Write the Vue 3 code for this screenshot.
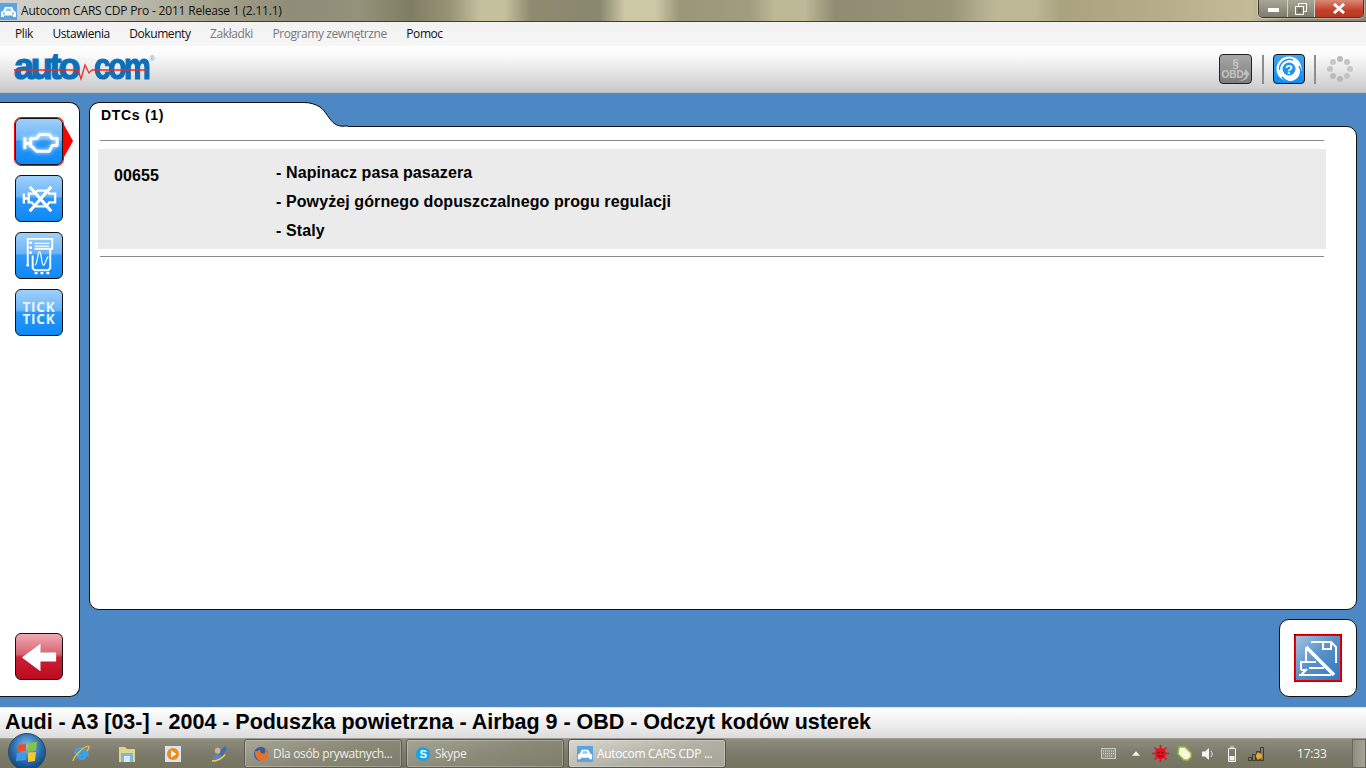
<script setup>
const menu = [
  { t: 'Plik' }, { t: 'Ustawienia' }, { t: 'Dokumenty' },
  { t: 'Zakładki', off: true }, { t: 'Programy zewnętrzne', off: true }, { t: 'Pomoc' }
]
const lines = ['- Napinacz pasa pasazera', '- Powyżej górnego dopuszczalnego progu regulacji', '- Staly']
const dots = [[14,4,'#bbb'],[21,7,'#c4c4c4'],[24,14,'#c8c8c8'],[21,21,'#c4c4c4'],[14,24,'#b8b8b8'],[7,21,'#bbb'],[4,14,'#c4c4c4'],[7,7,'#c8c8c8']]
</script>

<template>
  <div class="app">
    <header class="title">
      <svg class="caricon" width="17" height="17" viewBox="0 0 17 17"><rect width="17" height="17" fill="#5aa5e0"/><path d="M1 14V9l2-1 2-4h7l2 4 2 1v5h-3v-1.500H4V14z" fill="#fff"/><path d="M5.500 8l1-2.500h4l1 2.500z" fill="#8cc4ee"/><circle cx="4" cy="10.500" r="1" fill="#5aa5e0"/><circle cx="13" cy="10.500" r="1" fill="#5aa5e0"/></svg>
      <span class="titletext">Autocom CARS CDP Pro - 2011 Release 1 (2.11.1)</span>
      <div class="winbtns">
        <div class="wb wmin"><i></i></div>
        <div class="wb wres"><svg width="12" height="12" viewBox="0 0 12 12"><path d="M3.500.5h8v8h-8z" fill="none" stroke="#fff"/><path d="M.5 3.500h8v8h-8z" fill="#8a8775" stroke="#fff"/><path d="M2.500 5.500h4v4h-4z" fill="#6b6958"/></svg></div>
        <div class="wb wclose"><svg width="14" height="11" viewBox="0 0 14 11"><path d="M2 1l10 9M12 1L2 10" stroke="#fff" stroke-width="3"/></svg></div>
      </div>
    </header>

    <nav class="menu">
      <span v-for="m in menu" :key="m.t" :class="{ off: m.off }">{{ m.t }}</span>
    </nav>

    <div class="toolbar">
      <div class="logo">
        <span class="auto">auto</span><span class="com">com</span><sup>®</sup>
        <svg class="wave" width="136" height="22" viewBox="0 0 136 22"><path d="M0 11H64l3 9 4-14 4 8 3-3H134" fill="none" stroke="#ee2a24" stroke-width="1.300"/></svg>
      </div>
      <div class="tools">
        <div class="obd">
          <span class="par">§</span><span class="obdt">OBD</span>
          <svg class="obdarrow" width="12" height="13" viewBox="0 0 12 13"><path d="M0 12c4 1 7-1 8-5H5l3-6 4 6h-2c0 4-5 7-10 5z" fill="#bdbdbd"/></svg>
        </div>
        <i class="sep"></i>
        <div class="help">
          <svg width="28" height="28" viewBox="0 0 28 28"><circle cx="14" cy="14" r="12.500" fill="#fff"/><circle cx="14" cy="14" r="6.500" fill="#1f93ee"/><path d="M7 22A10 10 0 0 0 24 11" fill="none" stroke="#1f93ee" stroke-width="1.400"/><path d="M4.500 15A10 10 0 0 1 18 5" fill="none" stroke="#1f93ee" stroke-width="1.400"/><text x="14" y="18.500" text-anchor="middle" class="q">?</text></svg>
        </div>
        <i class="sep"></i>
        <svg class="spin" width="30" height="30" viewBox="0 0 30 30"><circle v-for="(d, i) in dots" :key="i" :cx="d[0] + 1" :cy="d[1] + 1" r="3" :fill="d[2]"/></svg>
      </div>
    </div>

    <main class="stage">
      <aside class="side">
        <div class="btn sel">
          <svg class="ic glow" width="45" height="45" viewBox="0 0 46 46"><path d="M8 19v12M8 25h6M14 20h6l3-4h10l3 4h5v7h-5l-3 6H20l-5-5h-1z" fill="none" stroke="#fff" stroke-width="3" stroke-linejoin="round"/></svg>
          <i class="pointer"></i>
        </div>
        <div class="btn">
          <svg class="ic" width="45" height="45" viewBox="0 0 46 46"><path d="M7 18v10M7 23h5M12 18h6l3-3h9l3 3h6v9h-6l-3 4H19l-4-4h-3z" fill="none" stroke="#fff" stroke-width="2.400"/><path d="M13 11l22 25M35 11L13 36" stroke="#fff" stroke-width="3.200"/></svg>
        </div>
        <div class="btn">
          <svg class="ic" width="45" height="45" viewBox="0 0 46 46"><path d="M11 33V6h25v10H18" fill="none" stroke="#fff" stroke-width="2"/><circle cx="14" cy="10" r="1.400" fill="#fff"/><circle cx="14" cy="15" r="1.400" fill="#fff"/><circle cx="14" cy="20" r="1.400" fill="#fff"/><circle cx="11" cy="33" r="1.500" fill="#fff"/><path d="M18 10.500h15M18 13.500h15" stroke="#fff" stroke-width="1.300"/><path d="M34 16v20l-2 2H18l-2-2V23" fill="none" stroke="#fff" stroke-width="2"/><path d="M18 33c3 0 3-14 5-14s2 14 4 14 2-6 5-9" fill="none" stroke="#fff" stroke-width="1.200"/><path d="M18 41h3M24 41h3M30 41h3" stroke="#fff" stroke-width="2.400"/></svg>
        </div>
        <div class="btn tick"><span>TICK<br>TICK</span></div>
        <div class="btn red">
          <svg class="ic" width="45" height="45" viewBox="0 0 46 46"><path d="M5 24L24 10v9h16v9H24v10z" fill="#fff"/></svg>
        </div>
      </aside>

      <div class="content">
        <section class="panel">
          <div class="tabrow">
            <div class="tab">DTCs (1)</div>
            <svg class="curve" width="44" height="25" viewBox="0 0 44 25"><path d="M0 .500C6 .500 11 2 16 5s10 14 15 17 7 2 13 2v1H0z" fill="#fff"/><path d="M0 .500C6 .500 11 2 16 5s10 14 15 17 7 2 13 2" fill="none" stroke="#000"/></svg>
            <div class="tabfill"></div>
          </div>
          <div class="pbody">
            <hr>
            <div class="row">
              <div class="code">00655</div>
              <div class="desc"><div v-for="l in lines" :key="l">{{ l }}</div></div>
            </div>
            <hr>
          </div>
        </section>
        <div class="foot">
          <div class="printbox">
            <div class="print">
              <svg width="44" height="44" viewBox="2 2 44 44"><path d="M17 8h20l5 5v16M29 8v7h8V8" fill="none" stroke="#fff" stroke-width="2"/><path d="M12 13l28 28" stroke="#fff" stroke-width="3.500"/><path d="M12 15v12M7 36v-8h15M7 36h6M5 41h32" fill="none" stroke="#fff" stroke-width="2"/><path d="M15 34h15M7 41l6-6" fill="none" stroke="#fff" stroke-width="2"/></svg>
            </div>
          </div>
        </div>
      </div>
    </main>

    <div class="status">Audi - A3 [03-] - 2004 - Poduszka powietrzna - Airbag 9 - OBD - Odczyt kodów usterek</div>

    <footer class="taskbar">
      <div class="orb">
        <svg width="38" height="38" viewBox="0 0 38 38"><defs><radialGradient id="o" cx=".5" cy=".35" r=".7"><stop offset="0" stop-color="#8cc2ec"/><stop offset=".55" stop-color="#2a6db0"/><stop offset="1" stop-color="#0f3a6e"/></radialGradient></defs><circle cx="19" cy="19" r="18.500" fill="url(#o)" stroke="#2b4a63"/><path d="M10 12l8-1.500v7.500l-9 .5z" fill="#e8522b"/><path d="M20 10.500l9-2-1 9-8 .5z" fill="#86c440"/><path d="M9 20l9-.5V27l-10 1z" fill="#3e9ae6"/><path d="M20 19.500l8-.5-1 9-7 1z" fill="#f3c82e"/></svg>
      </div>
      <div class="quick">
        <svg width="18" height="18" viewBox="0 0 18 18"><path d="M15.500 10.500H5.500C6 14 11 14.500 13.500 12.500M3 9c0-4 3-6 6.500-6s6 3 6 7H5.500c0-4 7-4 7.500-1.500" fill="none" stroke="#3fa2ec" stroke-width="2.400"/><path d="M1 16C2 11 11 2 16 1c2 0 1 3-1 5" fill="none" stroke="#f2c445" stroke-width="1.200"/></svg>
        <svg width="18" height="18" viewBox="0 0 18 18"><path d="M1 2h6l2 2h8v13H1z" fill="#e6d28a"/><path d="M3 8h12v9H3z" fill="#7cb8de"/><path d="M6 11h6v6H6z" fill="#dceaf5"/></svg>
        <svg width="16" height="16" viewBox="0 0 16 16"><rect width="16" height="16" fill="#d9e4ee"/><circle cx="8" cy="8" r="6" fill="#f08a1c"/><path d="M6 4.500L11.500 8 6 11.500z" fill="#fff"/></svg>
        <svg width="17" height="17" viewBox="0 0 18 18"><path d="M7 8l8-7 2 3-5 8z" fill="#3c6fb0"/><circle cx="7" cy="6" r="3" fill="#d8b48c"/><path d="M2 16c0-5 3-7 6-6s3 4 2 6z" fill="#5a86c2"/><path d="M1 17c5 0 10-2 14-7" fill="none" stroke="#f2d23c" stroke-width="1.500"/></svg>
      </div>
      <div class="tasks">
        <div class="task">
          <svg width="16" height="16" viewBox="0 0 17 17"><circle cx="8.500" cy="8.500" r="7.500" fill="#2c5f9e"/><path d="M2 5c0 8 4 11 8 11s6-3 6-7c0-3-2-6-4-7 2 3 1 6-1 6-3 0-4-2-3-4-3 0-3 3-6 1z" fill="#e8702a"/></svg>
          <span>Dla osób prywatnych...</span>
        </div>
        <div class="task">
          <svg width="16" height="16" viewBox="0 0 17 17"><circle cx="8.500" cy="8.500" r="7.500" fill="#12a5e8"/><text x="8.500" y="13" text-anchor="middle" class="sk">S</text></svg>
          <span>Skype</span>
        </div>
        <div class="task active">
          <svg width="16" height="16" viewBox="0 0 17 17"><rect width="17" height="17" fill="#5aa5e0"/><path d="M1 14V9l2-1 2-4h7l2 4 2 1v5h-3v-1.500H4V14z" fill="#fff"/><path d="M5.500 8l1-2.500h4l1 2.500z" fill="#8cc4ee"/></svg>
          <span>Autocom CARS CDP ...</span>
        </div>
      </div>
      <div class="tray">
        <svg width="15" height="11" viewBox="0 0 15 11"><rect x=".5" y=".5" width="14" height="10" fill="#8f8f82" stroke="#c8c8c0"/><path d="M2 3h11M2 5.500h11M4 8h7" stroke="#e2e2da" stroke-dasharray="1 1"/></svg>
        <svg width="8" height="6" viewBox="0 0 9 6"><path d="M4.500 0L9 5H0z" fill="#f2f2f0"/></svg>
        <svg width="17" height="17" viewBox="0 0 17 17"><circle cx="8.500" cy="8.500" r="5.500" fill="#e8101c"/><path d="M8.500 0v17M0 8.500h17M2.500 2.500l12 12M14.500 2.500l-12 12" stroke="#e8101c" stroke-width="1.600"/><circle cx="6.500" cy="7.500" r=".8" fill="#400"/><circle cx="10.500" cy="7.500" r=".8" fill="#400"/><path d="M6 10.500c1.500 1 3.500 1 5 0" fill="none" stroke="#400"/></svg>
        <svg width="15" height="15" viewBox="0 0 15 15"><path d="M2 1h6l6 6v4l-3 3H7L1 8z" fill="#f5f8dc" stroke="#8fbf3a" stroke-width="1.500"/></svg>
        <svg width="13" height="14" viewBox="0 0 13 14"><path d="M0 4.500h3L7 1v12L3 9.500H0z" fill="#f2f2f0"/><path d="M9 4c1.500 2 1.500 4 0 6" fill="none" stroke="#e8e8e4"/></svg>
        <svg width="10" height="16" viewBox="0 0 10 16"><path d="M3 1h4M1.500 2.500h7v13h-7z" fill="none" stroke="#f2f2f0"/><rect x="2.500" y="10" width="5" height="4.500" fill="#f2f2f0"/></svg>
        <svg width="16" height="14" viewBox="0 0 16 14"><path d="M.5 13.500v-3h3v3zM4.500 13.500v-6h3v6zM8.500 13.500v-9h3v9zM12.500 13.500V.5h3v13z" fill="none" stroke="#3c3c34"/><circle cx="11" cy="9" r="3" fill="#f5a71c"/></svg>
        <time>17:33</time>
        <div class="showdesk"></div>
      </div>
    </footer>
  </div>
</template>

<style scoped>
.app { width: 1366px; height: 768px; display: flex; flex-direction: column; overflow: hidden; position: relative; font-family: "Liberation Sans", Arial, sans-serif; background: #4d88c4; }
.title { height: 22px; flex: none; display: flex; align-items: center; box-sizing: border-box; padding-bottom: 1px; border-bottom: 1px solid #3f3d36; background: linear-gradient(90deg, #d2d2cc 0, #c5c4b8 100px, #a8a691 200px, #8f8c78 290px, #94927a 360px, #7f7d62 410px, #989478 450px, #c4bf9c 480px, #c4bf9c 505px, #8f8b70 530px, #8a8770 600px, #cdc8a6 625px, #cdc8a6 655px, #9a9679 680px, #a09c80 750px, #bdb896 775px, #bdb896 805px, #8f8c72 835px, #989578 950px, #bdb796 995px, #bdb796 1035px, #aaa380 1060px, #b5ab88 1150px, #c4bb98 1250px, #8e8a73 1290px, #8a8775 1366px); position: relative; }
.caricon { margin: 2px 4px 0 0; flex: none; }
.titletext { font: 12px "Open Sans", sans-serif; color: #111; letter-spacing: -.19px; margin-top: 1px; }
.winbtns { position: absolute; right: 2px; top: 0; height: 17px; display: flex; border: 1px solid #3a3a30; border-top: 0; border-radius: 0 0 5px 5px; overflow: hidden; box-shadow: 0 0 0 1px rgba(255,255,255,.35); }
.wb { display: flex; align-items: center; justify-content: center; background: linear-gradient(#a9a797, #7d7b69); }
.wmin { width: 28px; border-right: 1px solid #d0d0c8; }
.wmin i { width: 11px; height: 4px; background: #fff; margin-top: 3px; }
.wres { width: 26px; border-right: 1px solid #d0d0c8; }
.wclose { width: 48px; background: linear-gradient(#d98a74, #c2402a 60%, #b83a22); }

.menu { height: 24px; flex: none; box-sizing: border-box; padding: 0 0 2px 15px; display: flex; align-items: center; gap: 19.500px; background: linear-gradient(#f2f2f2, #f6f6f6); font: 12px "Open Sans", sans-serif; color: #111; letter-spacing: -.42px; }
.menu .off { color: #77787a; }

.toolbar { height: 47px; flex: none; box-sizing: border-box; display: flex; align-items: center; justify-content: space-between; background: linear-gradient(#fff, #fbfbfb 20%, #c9c9c9); border-bottom: 1px solid #bdbdbd; }
.logo { position: relative; margin-left: 14px; font: bold 36px/40px "Liberation Sans", sans-serif; color: #0d6fb8; -webkit-text-stroke: 1.200px #0d6fb8; display: flex; width: 140px; height: 40px; margin-top: -4px; }
.logo .auto { letter-spacing: -3.200px; }
.logo .com { margin-left: 17px; letter-spacing: -3.200px; display: inline-block; transform: scaleX(.84); transform-origin: left center; width: 52px; }
.logo sup { font-size: 8px; line-height: 8px; letter-spacing: 0; -webkit-text-stroke: 0; margin: 8px 0 0 3px; color: #6aa0cc; font-weight: 400; }
.wave { position: absolute; left: 0; top: 12px; }
.tools { display: flex; align-items: center; margin-right: 11px; gap: 9px; }
.obd { width: 31px; height: 28px; border: 1px solid #222; border-radius: 4px; margin-right: 1px; background: linear-gradient(#a8a8a8, #7c7c7c); position: relative; display: flex; flex-direction: column; align-items: center; color: #c4c4c4; overflow: hidden; }
.par { font: bold 12px/12px "Liberation Sans", sans-serif; margin-top: 3px; }
.obdt { font: bold 10px/10px "Liberation Sans", sans-serif; margin-left: -6px; }
.obdarrow { position: absolute; right: 1px; bottom: 2px; }
.sep { width: 2px; height: 29px; background: #8d8d8d; }
.help { width: 30px; height: 28px; border: 1px solid #111; border-radius: 4px; background: linear-gradient(#3aa4f5, #0f8df0); display: flex; align-items: center; justify-content: center; }
.q { font: bold 13px "Liberation Sans", sans-serif; fill: #fff; }

.stage { flex: 1; min-height: 0; display: flex; gap: 9px; padding: 9px 9px 10px 0; background: #4d88c4; }
.side { width: 80px; flex: none; box-sizing: border-box; background: #fff; border: 1px solid #111; border-left: 0; border-radius: 0 10px 10px 0; padding: 15px 0 16px 15px; display: flex; flex-direction: column; gap: 10px; }
.btn { width: 48px; height: 47px; box-sizing: border-box; border: 1px solid #111; border-radius: 6px; background: linear-gradient(#9fd0fb 0, #6ab4f8 45%, #2a97fa 50%, #0d89f5); display: flex; align-items: center; justify-content: center; position: relative; flex: none; }
.btn.sel { outline: 1px solid #f00; border-radius: 6px; }
.glow { filter: drop-shadow(0 0 2px rgba(255,255,255,.9)); }
.pointer { position: absolute; left: 47px; top: 4px; width: 0; height: 0; border-top: 18px solid transparent; border-bottom: 18px solid transparent; border-left: 10px solid #f00; }
.tick { font: bold 13.500px/12px "Open Sans", sans-serif; color: #e8f4ff; letter-spacing: .8px; text-align: center; }
.red { margin-top: auto; background: linear-gradient(#f0aab2 0, #d66473 45%, #c92033 52%, #bd0a1f); }

.content { flex: 1; min-width: 0; display: flex; flex-direction: column; gap: 9px; }
.panel { flex: 1; min-height: 0; display: flex; flex-direction: column; }
.tabrow { display: flex; height: 25px; flex: none; position: relative; z-index: 1; margin-bottom: -1px; }
.tab { width: 215px; box-sizing: border-box; background: #fff; border: 1px solid #111; border-right: 0; border-bottom: 0; border-radius: 10px 0 0 0; padding: 4px 0 0 11px; font: bold 14px/17px "Liberation Sans", sans-serif; letter-spacing: .7px; color: #000; }
.curve { flex: none; }
.tabfill { flex: 1; }
.pbody { flex: 1; min-height: 0; box-sizing: border-box; background: #fff; border: 1px solid #111; border-radius: 0 10px 10px 10px; padding: 13px 32px 0 10px; }
hr { height: 1px; border: 0; background: #8a8a8a; margin: 0; }
.row { margin: 8px -2px 7px -2px; height: 100px; background: #ebebeb; display: flex; padding: 0 0 0 16px; color: #000; font-weight: 700; }
.code { width: 162px; font-size: 16px; line-height: 20px; padding-top: 17px; letter-spacing: .1px; }
.desc { font-size: 16px; line-height: 29px; padding-top: 9px; letter-spacing: .1px; }
.foot { flex: none; display: flex; justify-content: flex-end; }
.printbox { width: 78px; height: 78px; box-sizing: border-box; background: #fff; border: 1px solid #111; border-radius: 10px; display: flex; align-items: center; justify-content: center; }
.print { width: 48px; height: 48px; box-sizing: border-box; border: 1px dotted #111; box-shadow: inset 0 0 0 1px #e8000a; background: linear-gradient(135deg, #a8c5e0, #5590ca 50%, #2e78bd) padding-box, #e8000a border-box; display: flex; align-items: center; justify-content: center; }

.status { height: 31px; flex: none; box-sizing: border-box; background: linear-gradient(#fff, #e8e8e8 70%, #dcdcdc); border-top: 1px solid #e4e4e4; padding: 0 0 0 5px; font: bold 21.500px/28px "Liberation Sans", sans-serif; letter-spacing: -.025px; color: #000; white-space: nowrap; }

.taskbar { height: 30px; flex: none; display: flex; align-items: center; position: relative; background: linear-gradient(#8e8d7e, #7c7b6b 50%, #75745f); border-top: 1px solid #9d9d92; box-sizing: border-box; }
.orb { position: absolute; left: 8px; top: -6px; width: 38px; height: 38px; }
.quick { display: grid; grid-template-columns: repeat(4, 46px); justify-items: center; align-items: center; margin-left: 58px; }
.tasks { display: flex; gap: 4px; margin-left: 2px; }
.task { width: 158px; height: 29px; box-sizing: border-box; border: 1px solid #5b5a4e; border-radius: 3px; box-shadow: inset 0 0 0 1px rgba(255,255,255,.25); background: linear-gradient(165deg, #a5a496, #8b8a79 50%, #7e7d6b); display: flex; align-items: center; gap: 4px; padding-left: 8px; font: 12px "Open Sans", sans-serif; color: #eeeee8; letter-spacing: -.33px; white-space: nowrap; overflow: hidden; }
.task.active { background: linear-gradient(165deg, #d9d9d2, #b2b1a5 55%, #a5a497); border-color: #55544a; color: #fff; }
.tray { position: absolute; right: 0; top: 0; height: 29px; display: flex; align-items: center; }
.tray > svg:nth-child(1) { margin-right: 16px; }
.tray > svg:nth-child(2) { margin-right: 12px; }
.tray > svg:nth-child(3) { margin-right: 8px; }
.tray > svg:nth-child(4) { margin-right: 10px; }
.tray > svg:nth-child(5) { margin-right: 12px; }
.tray > svg:nth-child(6) { margin-right: 11px; }
.tray time { font: 12px "Open Sans", sans-serif; color: #f4f4f0; margin-left: 33px; width: 55px; letter-spacing: -.2px; }
.showdesk { width: 14px; height: 29px; border: 1px solid #66655a; box-sizing: border-box; background: linear-gradient(90deg, #8f8e7f, #a5a496); }
.sk { font: bold 12px "Liberation Sans", sans-serif; fill: #fff; }
</style>
